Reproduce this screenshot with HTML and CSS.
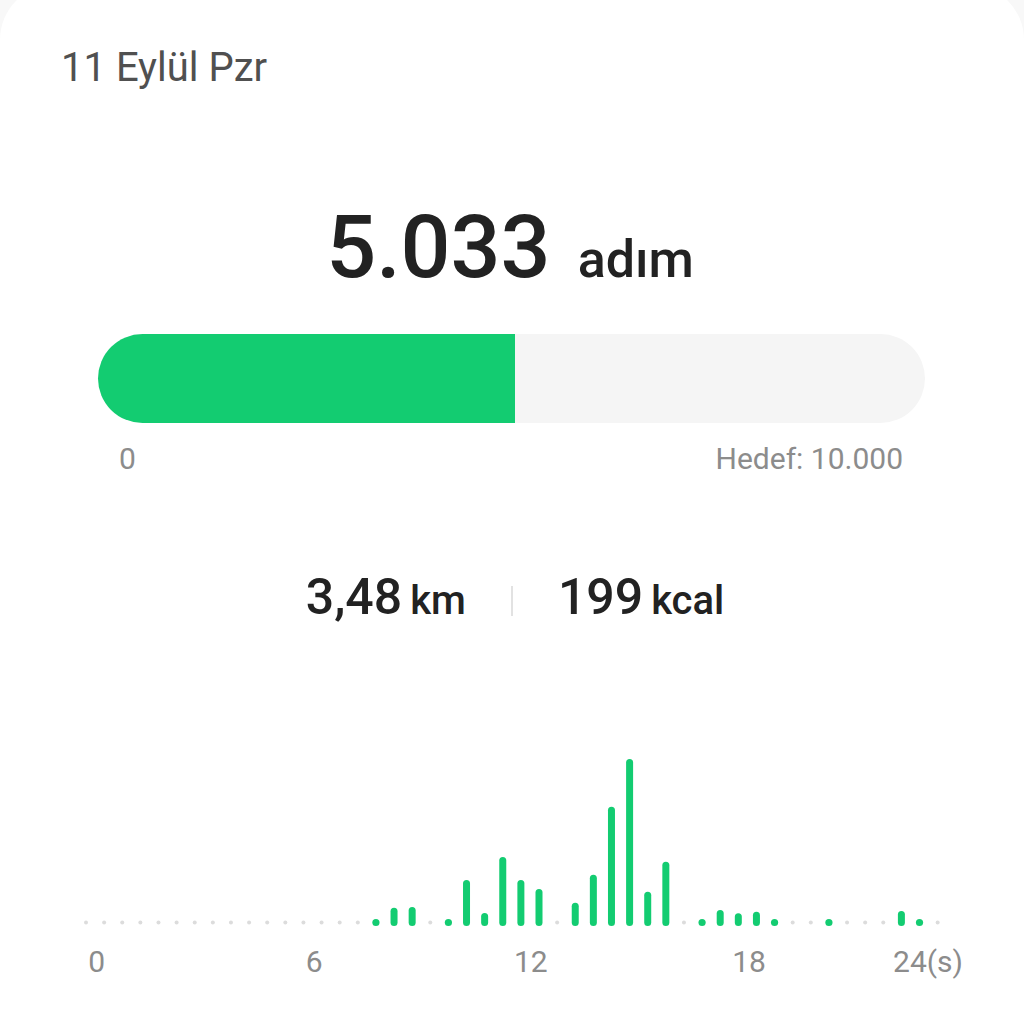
FILE: index.html
```html
<!DOCTYPE html>
<html lang="tr">
<head>
<meta charset="utf-8">
<title>Adım</title>
<link rel="stylesheet" href="styles.css">
</head>
<body>
<main class="card">
  <div class="date">11 Eylül Pzr</div>

  <div class="steps">
    <span class="steps-value">5.033</span>
    <span class="steps-unit">adım</span>
  </div>

  <div class="progress">
    <div class="progress-fill" style="width: 50.4%"></div>
  </div>
  <div class="progress-labels">
    <span>0</span>
    <span>Hedef: 10.000</span>
  </div>

  <div class="stats">
    <div class="stat"><span class="stat-value">3,48</span><span class="stat-unit">km</span></div>
    <div class="stat-sep"></div>
    <div class="stat"><span class="stat-value">199</span><span class="stat-unit">kcal</span></div>
  </div>

  <svg class="chart" viewBox="0 740 1024 250" width="1024" height="250">
    <g class="grey-dots">
      <circle cx="86" cy="922.5" r="2"/>
      <circle cx="104.12" cy="922.5" r="2"/>
      <circle cx="122.24" cy="922.5" r="2"/>
      <circle cx="140.36" cy="922.5" r="2"/>
      <circle cx="158.48" cy="922.5" r="2"/>
      <circle cx="176.6" cy="922.5" r="2"/>
      <circle cx="194.72" cy="922.5" r="2"/>
      <circle cx="212.84" cy="922.5" r="2"/>
      <circle cx="230.96" cy="922.5" r="2"/>
      <circle cx="249.08" cy="922.5" r="2"/>
      <circle cx="267.2" cy="922.5" r="2"/>
      <circle cx="285.32" cy="922.5" r="2"/>
      <circle cx="303.44" cy="922.5" r="2"/>
      <circle cx="321.56" cy="922.5" r="2"/>
      <circle cx="339.68" cy="922.5" r="2"/>
      <circle cx="357.8" cy="922.5" r="2"/>
      <circle cx="430.28" cy="922.5" r="2"/>
      <circle cx="557.12" cy="922.5" r="2"/>
      <circle cx="683.96" cy="922.5" r="2"/>
      <circle cx="792.68" cy="922.5" r="2"/>
      <circle cx="810.8" cy="922.5" r="2"/>
      <circle cx="847.04" cy="922.5" r="2"/>
      <circle cx="865.16" cy="922.5" r="2"/>
      <circle cx="883.28" cy="922.5" r="2"/>
      <circle cx="937.64" cy="922.5" r="2"/>
    </g>
    <g class="green-dots">
      <circle cx="375.92" cy="922.5" r="3.6"/>
      <circle cx="448.4" cy="922.5" r="3.6"/>
      <circle cx="702.08" cy="922.5" r="3.6"/>
      <circle cx="774.56" cy="922.5" r="3.6"/>
      <circle cx="828.92" cy="922.5" r="3.6"/>
      <circle cx="919.52" cy="922.5" r="3.6"/>
    </g>
    <g class="bars">
      <line x1="394.04" x2="394.04" y1="922.5" y2="911.2"/>
      <line x1="412.16" x2="412.16" y1="922.5" y2="910.5"/>
      <line x1="466.52" x2="466.52" y1="922.5" y2="883.5"/>
      <line x1="484.64" x2="484.64" y1="922.5" y2="916.5"/>
      <line x1="502.76" x2="502.76" y1="922.5" y2="860.5"/>
      <line x1="520.88" x2="520.88" y1="922.5" y2="883.5"/>
      <line x1="539" x2="539" y1="922.5" y2="892.5"/>
      <line x1="575.24" x2="575.24" y1="922.5" y2="906.2"/>
      <line x1="593.36" x2="593.36" y1="922.5" y2="878.2"/>
      <line x1="611.48" x2="611.48" y1="922.5" y2="810.2"/>
      <line x1="629.6" x2="629.6" y1="922.5" y2="762.5"/>
      <line x1="647.72" x2="647.72" y1="922.5" y2="895.2"/>
      <line x1="665.84" x2="665.84" y1="922.5" y2="865.2"/>
      <line x1="720.2" x2="720.2" y1="922.5" y2="913.5"/>
      <line x1="738.32" x2="738.32" y1="922.5" y2="916.8"/>
      <line x1="756.44" x2="756.44" y1="922.5" y2="915.2"/>
      <line x1="901.4" x2="901.4" y1="922.5" y2="914.5"/>
    </g>
    <g class="axis">
      <text x="96.7" y="972" text-anchor="middle">0</text>
      <text x="314.2" y="972" text-anchor="middle">6</text>
      <text x="530.8" y="972" text-anchor="middle">12</text>
      <text x="749" y="972" text-anchor="middle">18</text>
      <text x="963" y="972" text-anchor="end">24(s)</text>
    </g>
  </svg>
</main>
</body>
</html>
```

FILE: styles.css
```css
html, body {
  margin: 0;
  padding: 0;
}

body {
  width: 1024px;
  height: 1024px;
  overflow: hidden;
  background: #f8f8f8;
  font-family: Roboto, "Noto Sans", "Liberation Sans", sans-serif;
}

.card {
  display: flex;
  flex-direction: column;
  background: #ffffff;
  margin-top: -16px;
  padding-top: 60px;
  min-height: 1100px;
  border-radius: 56px;
}

.date {
  padding-left: 61px;
  font-size: 40px;
  line-height: 48px;
  color: #505050;
}

.steps {
  margin-top: 105px;
  height: 100px;
  display: flex;
  justify-content: center;
  align-items: baseline;
  gap: 27px;
  padding-right: 4px;
  color: #222222;
  font-weight: 500;
}

.steps-value {
  font-size: 88px;
  line-height: 100px;
}

.steps-unit {
  font-size: 52px;
  line-height: 52px;
}

.progress {
  margin: 37px 99px 0 98px;
  height: 89px;
  border-radius: 45px;
  background: #f5f5f5;
  display: flex;
}

.progress-fill {
  height: 100%;
  background: #13cc71;
  border-radius: 45px 0 0 45px;
}

.progress-labels {
  margin: 18px 121px 0 119px;
  display: flex;
  justify-content: space-between;
  font-size: 30px;
  line-height: 36px;
  color: #8c8c8c;
}

.stats {
  margin-top: 92px;
  display: flex;
  justify-content: center;
  align-items: center;
  gap: 45px;
  height: 60px;
  padding-left: 6px;
  color: #222222;
  font-weight: 500;
}

.stat {
  display: flex;
  align-items: baseline;
  line-height: 60px;
}

.stat-value {
  font-size: 50px;
}

.stat-unit {
  font-size: 40px;
  margin-left: 8px;
}

.stat-sep {
  width: 2px;
  height: 30px;
  background: #e2e2e2;
  margin-top: 4px;
}

.chart {
  display: block;
  margin-top: 111px;
}

.grey-dots circle {
  fill: #dcdcdc;
}

.green-dots circle {
  fill: #13cc71;
}

.bars line {
  stroke: #13cc71;
  stroke-width: 7;
  stroke-linecap: round;
}

.axis text {
  font-family: Roboto, "Noto Sans", "Liberation Sans", sans-serif;
  font-size: 30px;
  fill: #8c8c8c;
}
```
